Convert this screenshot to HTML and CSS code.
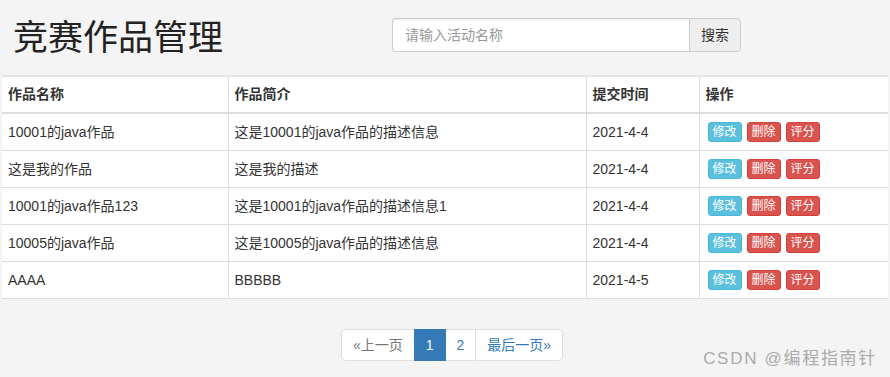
FILE: index.html
```html
<!DOCTYPE html>
<html lang="zh-CN">
<head>
    <meta charset="UTF-8">
    <meta name="viewport" content="width=device-width, initial-scale=1.0">
    <title>竞赛作品管理</title>
    <link rel="stylesheet" href="styles.css">
</head>
<body>
    <div class="page-header">
        <h1 class="page-title">竞赛作品管理</h1>
        <form class="search-group">
            <input class="search-input" type="text" placeholder="请输入活动名称">
            <button class="search-btn" type="button">搜索</button>
        </form>
    </div>

    <table class="works-table">
        <colgroup>
            <col class="col-name">
            <col class="col-desc">
            <col class="col-time">
            <col class="col-ops">
        </colgroup>
        <thead>
            <tr>
                <th>作品名称</th>
                <th>作品简介</th>
                <th>提交时间</th>
                <th>操作</th>
            </tr>
        </thead>
        <tbody>
            <tr>
                <td>10001的java作品</td>
                <td>这是10001的java作品的描述信息</td>
                <td>2021-4-4</td>
                <td><div class="ops"><a class="btn btn-info">修改</a><a class="btn btn-danger">删除</a><a class="btn btn-danger">评分</a></div></td>
            </tr>
            <tr>
                <td>这是我的作品</td>
                <td>这是我的描述</td>
                <td>2021-4-4</td>
                <td><div class="ops"><a class="btn btn-info">修改</a><a class="btn btn-danger">删除</a><a class="btn btn-danger">评分</a></div></td>
            </tr>
            <tr>
                <td>10001的java作品123</td>
                <td>这是10001的java作品的描述信息1</td>
                <td>2021-4-4</td>
                <td><div class="ops"><a class="btn btn-info">修改</a><a class="btn btn-danger">删除</a><a class="btn btn-danger">评分</a></div></td>
            </tr>
            <tr>
                <td>10005的java作品</td>
                <td>这是10005的java作品的描述信息</td>
                <td>2021-4-4</td>
                <td><div class="ops"><a class="btn btn-info">修改</a><a class="btn btn-danger">删除</a><a class="btn btn-danger">评分</a></div></td>
            </tr>
            <tr>
                <td>AAAA</td>
                <td>BBBBB</td>
                <td>2021-4-5</td>
                <td><div class="ops"><a class="btn btn-info">修改</a><a class="btn btn-danger">删除</a><a class="btn btn-danger">评分</a></div></td>
            </tr>
        </tbody>
    </table>

    <ul class="pagination">
        <li><a class="muted">«上一页</a></li>
        <li class="active"><a>1</a></li>
        <li><a>2</a></li>
        <li><a>最后一页»</a></li>
    </ul>

    <div class="watermark">CSDN @编程指南针</div>
</body>
</html>
```

FILE: styles.css
```css
body {
    margin: 0;
    padding: 0 2px;
    background: #f4f4f4;
    color: #333;
    font-family: "Liberation Sans", "Noto Sans CJK SC", sans-serif;
    font-size: 14px;
    line-height: 20px;
    height: 377px;
    overflow: hidden;
    position: relative;
}
.page-header {
    display: grid;
    grid-template-columns: 390px auto;
    height: 75px;
}
.page-title {
    margin: 18px 0 0 11px;
    font-size: 35px;
    font-weight: 400;
    line-height: 39px;
    color: #222;
}
.search-group {
    display: flex;
    margin-top: 18px;
    height: 34px;
}
.search-input {
    width: 297px;
    box-sizing: border-box;
    height: 34px;
    padding: 6px 12px;
    border: 1px solid #ccc;
    border-right: none;
    border-radius: 4px 0 0 4px;
    font: inherit;
    color: #555;
    background: #fff;
    box-shadow: inset 0 1px 1px rgba(0,0,0,0.075);
}
.search-input::placeholder {
    color: #999;
}
.search-btn {
    width: 52px;
    height: 34px;
    border: 1px solid #ccc;
    border-radius: 0 4px 4px 0;
    background: #eee;
    color: #333;
    font: inherit;
    padding: 0;
}
.works-table {
    width: 100%;
    border-collapse: collapse;
    background: #fff;
}
.col-name { width: 226px; }
.col-desc { width: 358px; }
.col-time { width: 113px; }
.works-table th,
.works-table td {
    height: 20px;
    padding: 8px 6px;
    text-align: left;
    vertical-align: middle;
    border: 1px solid #ddd;
    white-space: nowrap;
    line-height: 20px;
}
.works-table tr > :first-child { border-left: none; }
.works-table tr > :last-child { border-right: none; }
.works-table thead th {
    border-top: 2px solid #e4e4e4;
    border-bottom-width: 2px;
    font-weight: 700;
    padding-top: 7px;
}
.ops {
    display: flex;
    gap: 5px;
    padding-left: 2px;
}
.btn {
    display: block;
    padding: 0 4px;
    font-size: 12px;
    line-height: 18px;
    border: 1px solid transparent;
    border-radius: 3px;
    color: #fff;
}
.btn-info {
    background: #5bc0de;
    border-color: #46b8da;
}
.btn-danger {
    background: #d9534f;
    border-color: #d43f3a;
}
.pagination {
    display: flex;
    justify-content: center;
    margin: 30px 0 0 14px;
    padding: 0;
    list-style: none;
}
.pagination li a {
    display: block;
    padding: 5px 11px;
    border: 1px solid #ddd;
    margin-left: -1px;
    background: #fff;
    color: #337ab7;
    line-height: 20px;
}
.pagination li:first-child a {
    margin-left: 0;
    border-radius: 4px 0 0 4px;
}
.pagination li:last-child a {
    border-radius: 0 4px 4px 0;
}
.pagination .muted {
    color: #777;
}
.pagination .active a {
    background: #337ab7;
    border-color: #337ab7;
    color: #fff;
    position: relative;
}
.watermark {
    position: absolute;
    right: 13px;
    bottom: 8px;
    font-size: 17px;
    letter-spacing: 1.7px;
    color: #aaa;
    line-height: 20px;
}
```
